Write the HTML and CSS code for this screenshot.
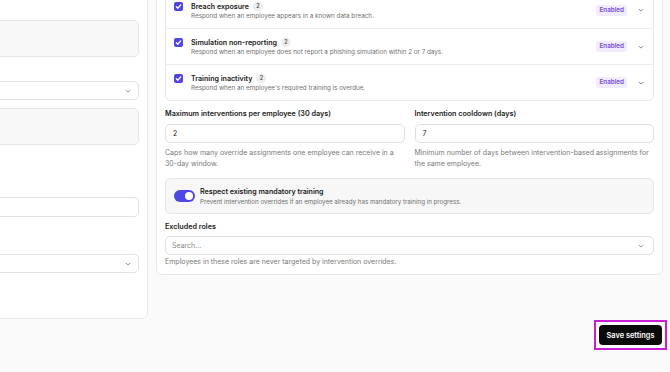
FILE: index.html
```html
<!DOCTYPE html>
<html lang="en">
<head>
<meta charset="utf-8">
<title>Intervention settings</title>
<link rel="stylesheet" href="styles.css">
</head>
<body>
<div class="page">
  <div class="layout">
    <aside class="card side">
      <div class="panel mt-29"></div>
      <div class="select mt-24"><svg class="chev" viewBox="0 0 8 5"><polyline points="1,1 4,4 7,1"/></svg></div>
      <div class="panel mt-8"></div>
      <div class="field mt-52"></div>
      <div class="select mt-37"><svg class="chev" viewBox="0 0 8 5"><polyline points="1,1 4,4 7,1"/></svg></div>
    </aside>

    <main class="card main">
      <div class="triggers">
        <div class="trigger">
          <span class="check"><svg viewBox="0 0 10 10"><polyline points="2.6,5.2 4.3,6.9 7.4,3.3"/></svg></span>
          <div class="trigger-text">
            <div class="trigger-title">Breach exposure <span class="count">2</span></div>
            <div class="trigger-desc">Respond when an employee appears in a known data breach.</div>
          </div>
          <span class="status">Enabled</span>
          <svg class="row-chev" viewBox="0 0 8 5"><polyline points="1,1 4,4 7,1"/></svg>
        </div>
        <div class="trigger">
          <span class="check"><svg viewBox="0 0 10 10"><polyline points="2.6,5.2 4.3,6.9 7.4,3.3"/></svg></span>
          <div class="trigger-text">
            <div class="trigger-title">Simulation non-reporting <span class="count">2</span></div>
            <div class="trigger-desc">Respond when an employee does not report a phishing simulation within 2 or 7 days.</div>
          </div>
          <span class="status">Enabled</span>
          <svg class="row-chev" viewBox="0 0 8 5"><polyline points="1,1 4,4 7,1"/></svg>
        </div>
        <div class="trigger">
          <span class="check"><svg viewBox="0 0 10 10"><polyline points="2.6,5.2 4.3,6.9 7.4,3.3"/></svg></span>
          <div class="trigger-text">
            <div class="trigger-title">Training inactivity <span class="count">2</span></div>
            <div class="trigger-desc">Respond when an employee's required training is overdue.</div>
          </div>
          <span class="status">Enabled</span>
          <svg class="row-chev" viewBox="0 0 8 5"><polyline points="1,1 4,4 7,1"/></svg>
        </div>
      </div>

      <div class="limits">
        <div class="limit">
          <label class="label">Maximum interventions per employee (30 days)</label>
          <div class="input">2</div>
          <p class="help">Caps how many override assignments one employee can receive in a 30-day window.</p>
        </div>
        <div class="limit">
          <label class="label">Intervention cooldown (days)</label>
          <div class="input">7</div>
          <p class="help">Minimum number of days between intervention-based assignments for the same employee.</p>
        </div>
      </div>

      <div class="toggle-box">
        <span class="toggle"><span class="knob"></span></span>
        <div>
          <div class="toggle-title">Respect existing mandatory training</div>
          <div class="toggle-desc">Prevent intervention overrides if an employee already has mandatory training in progress.</div>
        </div>
      </div>

      <label class="label roles-label">Excluded roles</label>
      <div class="search">
        <span>Search...</span>
        <svg class="chev" viewBox="0 0 8 5"><polyline points="1,1 4,4 7,1"/></svg>
      </div>
      <p class="help single">Employees in these roles are never targeted by intervention overrides.</p>
    </main>
  </div>

  <div class="footer">
    <div class="focus-ring"><button class="save">Save settings</button></div>
  </div>
</div>
</body>
</html>
```

FILE: styles.css
```css
* { box-sizing: border-box; }
html, body { margin: 0; padding: 0; }
body {
  background: #fafafa;
  font-family: Inter, "Noto Sans", sans-serif;
  color: #171717;
}
.page {
  display: flow-root;
  width: 670px;
  height: 372px;
  overflow: hidden;
}
.layout {
  display: flex;
  align-items: flex-start;
  gap: 8px;
  padding-right: 7px;
  margin-top: -18px;
}
.card {
  background: #fff;
  border: 1px solid #e8e8e8;
  border-radius: 6px;
}
.side {
  flex: 0 0 340px;
  margin-left: -192px;
  padding: 8px 8px 45px 8px;
  display: flex;
  flex-direction: column;
}
.mt-29 { margin-top: 29px; }
.mt-24 { margin-top: 24px; }
.mt-8 { margin-top: 8px; }
.mt-52 { margin-top: 52px; }
.mt-37 { margin-top: 37px; }
.panel { height: 37px; background: #f8f8f8; border: 1px solid #e7e7e7; border-radius: 5px; }
.select, .field { height: 19px; background: #fff; border: 1px solid #e3e3e3; border-radius: 5px; display: flex; align-items: center; justify-content: flex-end; padding-right: 7px; }
.field { height: 20px; }
.chev { width: 6px; height: 4px; fill: none; stroke: #8a8a8a; stroke-width: 1.2; }
.main { flex: 1; min-width: 0; padding: 8px 8px 7px 8px; }
.triggers { border: 1px solid #e8e8e8; border-radius: 6px; }
.trigger { display: flex; align-items: flex-start; height: 36px; padding: 8px 9px 0 8px; border-top: 1px solid #ececec; }
.trigger:first-child { border-top: 0; padding-top: 9px; }
.check { width: 9px; height: 9px; border-radius: 2px; background: #4f46e5; flex: 0 0 9px; margin-top: 1px; display: flex; }
.check svg { width: 9px; height: 9px; fill: none; stroke: #fff; stroke-width: 1.4; stroke-linecap: round; stroke-linejoin: round; }
.trigger-text { flex: 1; min-width: 0; margin-left: 8px; }
.trigger-title { font-size: 7.1px; font-weight: 600; line-height: 11px; display: flex; align-items: center; }
.count { display: inline-flex; align-items: center; justify-content: center; width: 10px; height: 9px; margin-left: 4px; border-radius: 5px; background: #ededed; color: #555; font-size: 5.5px; font-weight: 600; }
.trigger-desc { font-size: 6.3px; color: #707070; line-height: 9px; white-space: nowrap; }
.status { align-self: center; margin-top: -8px; font-size: 6.3px; font-weight: 600; color: #7c4ddb; background: #f1ebfd; border-radius: 3px; padding: 0 3px; height: 11px; line-height: 11px; margin-right: 11px; }
.trigger:first-child .status, .trigger:first-child .row-chev { margin-top: -9px; }
.row-chev { align-self: center; margin-top: -8px; width: 6px; height: 4px; fill: none; stroke: #777; stroke-width: 1.1; }
.limits { display: grid; grid-template-columns: 1fr 1fr; column-gap: 10px; margin-top: 8px; }
.label { display: block; font-size: 7.2px; font-weight: 600; line-height: 10px; color: #1a1a1a; }
.input { margin-top: 5px; height: 19px; border: 1px solid #e0e0e0; border-radius: 5px; padding-left: 7px; font-size: 7px; line-height: 17px; color: #222; background: #fff; }
.help { margin: 4px 0 0 0; font-size: 7px; line-height: 11px; color: #7a7a7a; }
.toggle-box { margin-top: 9px; height: 36px; display: flex; align-items: center; gap: 5px; background: #f7f7f7; border: 1px solid #e8e8e8; border-radius: 5px; padding: 0 8px; }
.toggle { width: 21px; height: 12px; border-radius: 6px; background: #4f46e5; display: flex; align-items: center; justify-content: flex-end; padding-right: 2px; flex: 0 0 21px; }
.knob { width: 8px; height: 8px; border-radius: 50%; background: #fff; }
.toggle-title { font-size: 7.1px; font-weight: 600; line-height: 10px; }
.toggle-desc { font-size: 6.2px; color: #6e6e6e; line-height: 9px; white-space: nowrap; }
.roles-label { margin-top: 8px; }
.search { margin-top: 4px; height: 19px; border: 1px solid #e0e0e0; border-radius: 5px; display: flex; align-items: center; justify-content: space-between; padding: 0 9px 0 6px; font-size: 7px; color: #8a8a8a; }
.help.single { margin-top: 1px; }
.footer { display: flex; justify-content: flex-end; margin-top: 1px; padding-right: 3px; }
.focus-ring { border: 2px solid #c81fd6; padding: 3px 3px; }
.save { display: block; width: 63px; height: 20px; border: 0; border-radius: 4px; background: #0a0a0a; color: #fff; font-family: Inter, "Noto Sans", sans-serif; font-size: 7.4px; font-weight: 600; padding: 0; }
```
